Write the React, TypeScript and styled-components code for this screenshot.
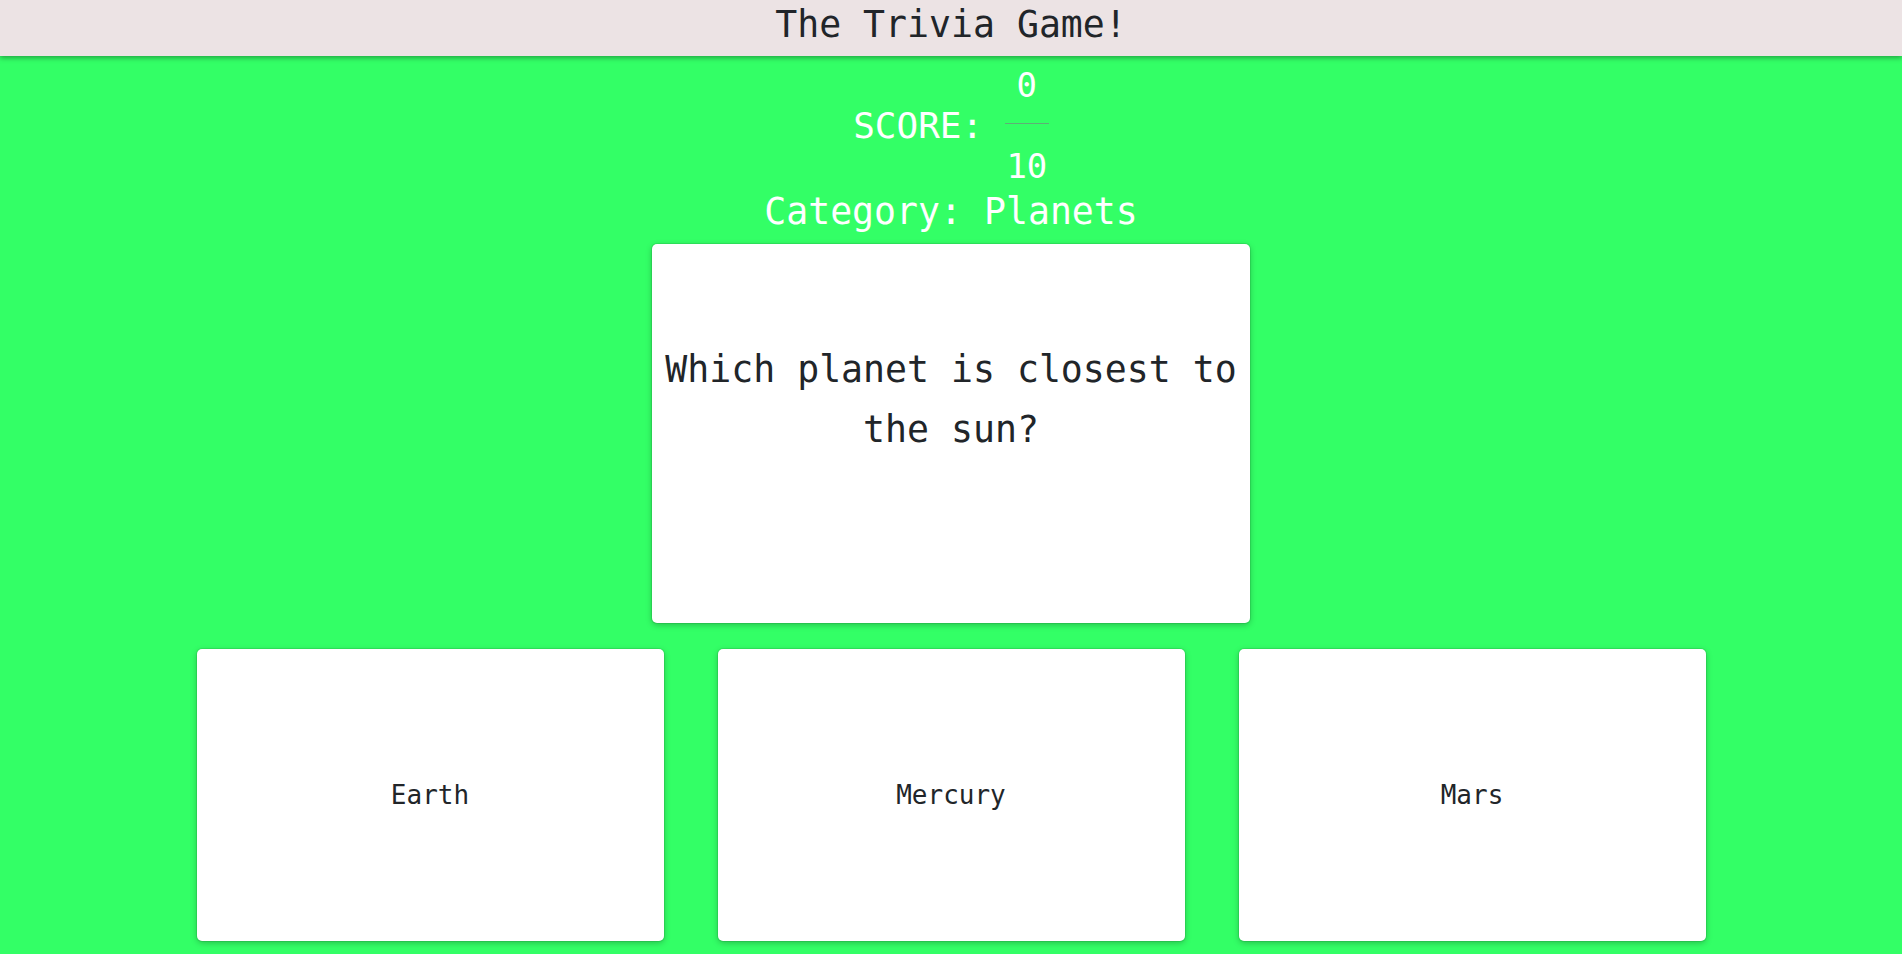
import React from 'react';

import styled, { createGlobalStyle } from 'styled-components';

const GlobalStyle = createGlobalStyle`
  html, body {
    margin: 0;
    padding: 0;
    background: #33ff66;
  }
  body {
    font-family: 'DejaVu Sans Mono', 'Liberation Mono', monospace;
    color: #212529;
    min-height: 100vh;
  }
`;

const PageStyled = styled.div`
  display: flex;
  flex-direction: column;
  align-items: center;
  min-height: 100vh;
`;

const HeaderStyled = styled.header`
  align-self: stretch;
  box-sizing: border-box;
  height: 56px;
  padding-bottom: 6px;
  background: #ece3e4;
  box-shadow: 0 2px 5px rgba(0, 0, 0, 0.35);
  display: flex;
  align-items: center;
  justify-content: center;
  position: relative;
  z-index: 1;
`;

const TitleStyled = styled.h1`
  margin: 0;
  font-size: 36.5px;
  font-weight: normal;
  line-height: 1;
  color: #212529;
`;

const ScoreRowStyled = styled.div`
  display: flex;
  align-items: center;
  justify-content: center;
  margin-top: 9px;
  color: #fff;
`;

const ScoreLabelStyled = styled.span`
  font-size: 36px;
  line-height: 40px;
  white-space: pre;
`;

const FractionStyled = styled.div`
  display: flex;
  flex-direction: column;
  align-items: center;
  width: 44px;
  font-size: 34px;
  line-height: 40px;
`;

const FractionLineStyled = styled.hr`
  width: 100%;
  margin: 18px 0 22px;
  border: none;
  border-top: 1px solid #5fae77;
`;

const CategoryStyled = styled.h2`
  margin: 6px 0 0;
  font-size: 36.5px;
  font-weight: normal;
  line-height: 40px;
  color: #fff;
`;

const QuestionCardStyled = styled.div`
  box-sizing: border-box;
  width: 598px;
  height: 379px;
  margin-top: 12px;
  padding: 96px 10px 0;
  background: #fff;
  border-radius: 5px;
  box-shadow: 0 0 0 1px rgba(0, 0, 0, 0.08), 0 2px 6px rgba(0, 0, 0, 0.25);
`;

const QuestionTextStyled = styled.p`
  margin: 0;
  font-size: 36.5px;
  line-height: 60px;
  text-align: center;
  color: #212529;
`;

const AnswersStyled = styled.div`
  display: grid;
  grid-template-columns: repeat(3, 467px);
  column-gap: 54px;
  justify-content: center;
  margin-top: 26px;
`;

const AnswerCardStyled = styled.button`
  height: 292px;
  display: flex;
  align-items: center;
  justify-content: center;
  padding: 0;
  margin: 0;
  border: none;
  background: #fff;
  border-radius: 5px;
  box-shadow: 0 0 0 1px rgba(0, 0, 0, 0.08), 0 2px 6px rgba(0, 0, 0, 0.25);
  font-family: inherit;
  font-size: 26px;
  color: #212529;
  cursor: pointer;
`;

const answers = ['Earth', 'Mercury', 'Mars'];

const App: React.FC = () => (
  <PageStyled>
    <GlobalStyle />
    <HeaderStyled>
      <TitleStyled>The Trivia Game!</TitleStyled>
    </HeaderStyled>
    <ScoreRowStyled>
      <ScoreLabelStyled>SCORE: </ScoreLabelStyled>
      <FractionStyled>
        <span>0</span>
        <FractionLineStyled />
        <span>10</span>
      </FractionStyled>
    </ScoreRowStyled>
    <CategoryStyled>Category: Planets</CategoryStyled>
    <QuestionCardStyled>
      <QuestionTextStyled>Which planet is closest to the sun?</QuestionTextStyled>
    </QuestionCardStyled>
    <AnswersStyled>
      {answers.map((answer) => (
        <AnswerCardStyled key={answer}>{answer}</AnswerCardStyled>
      ))}
    </AnswersStyled>
  </PageStyled>
);

export default App;
